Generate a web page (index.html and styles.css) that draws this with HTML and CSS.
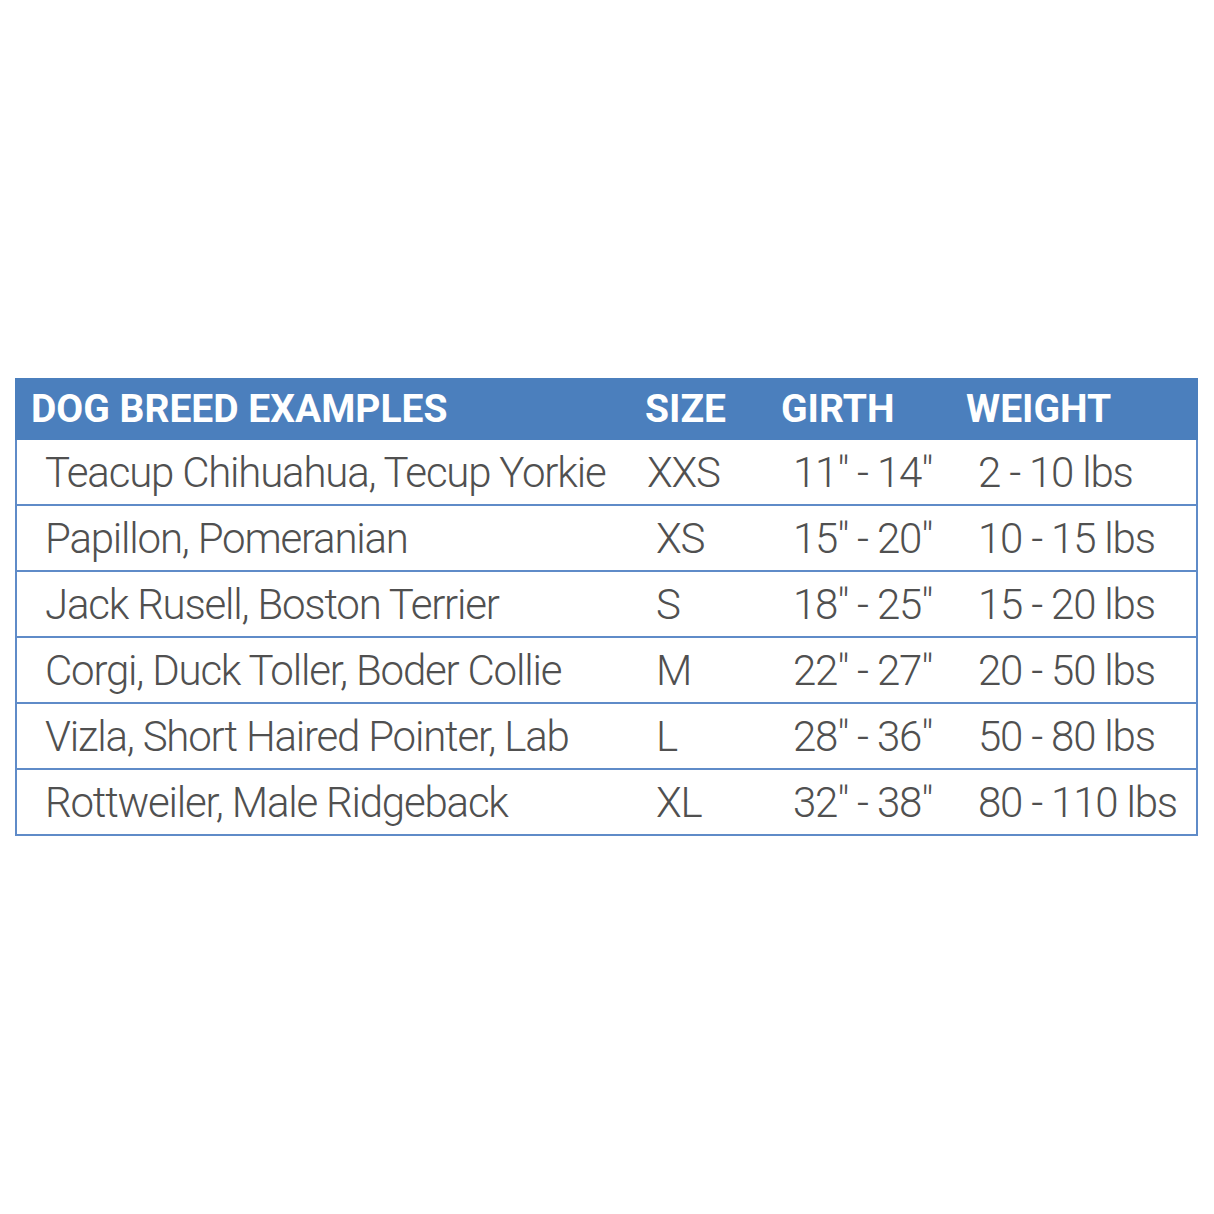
FILE: index.html
```html
<!DOCTYPE html>
<html>
<head>
<meta charset="utf-8">
<link rel="stylesheet" href="styles.css">
</head>
<body>
<div class="page">
  <div class="chart">
    <div class="row head">
      <div class="c1">DOG BREED EXAMPLES</div>
      <div class="c2">SIZE</div>
      <div class="c3">GIRTH</div>
      <div class="c4">WEIGHT</div>
    </div>
    <div class="row">
      <div class="c1">Teacup Chihuahua, Tecup Yorkie</div>
      <div class="c2 wide">XXS</div>
      <div class="c3">11" - 14"</div>
      <div class="c4">2 - 10 lbs</div>
    </div>
    <div class="row">
      <div class="c1">Papillon, Pomeranian</div>
      <div class="c2">XS</div>
      <div class="c3">15" - 20"</div>
      <div class="c4">10 - 15 lbs</div>
    </div>
    <div class="row">
      <div class="c1">Jack Rusell, Boston Terrier</div>
      <div class="c2">S</div>
      <div class="c3">18" - 25"</div>
      <div class="c4">15 - 20 lbs</div>
    </div>
    <div class="row">
      <div class="c1">Corgi, Duck Toller, Boder Collie</div>
      <div class="c2">M</div>
      <div class="c3">22" - 27"</div>
      <div class="c4">20 - 50 lbs</div>
    </div>
    <div class="row">
      <div class="c1">Vizla, Short Haired Pointer, Lab</div>
      <div class="c2">L</div>
      <div class="c3">28" - 36"</div>
      <div class="c4">50 - 80 lbs</div>
    </div>
    <div class="row">
      <div class="c1">Rottweiler, Male Ridgeback</div>
      <div class="c2">XL</div>
      <div class="c3">32" - 38"</div>
      <div class="c4">80 - 110 lbs</div>
    </div>
  </div>
</div>
</body>
</html>
```
FILE: styles.css
```css
html, body {
  margin: 0;
  padding: 0;
  background: #ffffff;
}
.page {
  width: 1214px;
  height: 1214px;
  padding-top: 378px;
  padding-left: 15px;
  box-sizing: border-box;
}
.chart {
  width: 1183px;
  font-family: Roboto, "Liberation Sans", sans-serif;
}
.row {
  display: grid;
  grid-template-columns: 623px 135px 185px 1fr;
  align-items: center;
  height: 64px;
  border-left: 2px solid #5f8bc8;
  border-right: 2px solid #5f8bc8;
  border-bottom: 2px solid #5f8bc8;
  font-weight: 300;
  font-size: 42px;
  letter-spacing: -1.2px;
  color: #505050;
  white-space: nowrap;
}
.row.head {
  height: 62px;
  border: none;
  background: #4b7fbd;
  color: #ffffff;
  font-weight: 700;
  font-size: 39px;
  letter-spacing: 0;
}
.row .c1 { padding-left: 28px; }
.row .c2 { padding-left: 16px; }
.row .c2.wide { padding-left: 7px; }
.row .c3 { padding-left: 18px; }
.row .c4 { padding-left: 18px; }
.row.head .c1 { padding-left: 16px; }
.row.head .c2 { padding-left: 7px; }
.row.head .c3 { padding-left: 8px; }
.row.head .c4 { padding-left: 8px; }
```
